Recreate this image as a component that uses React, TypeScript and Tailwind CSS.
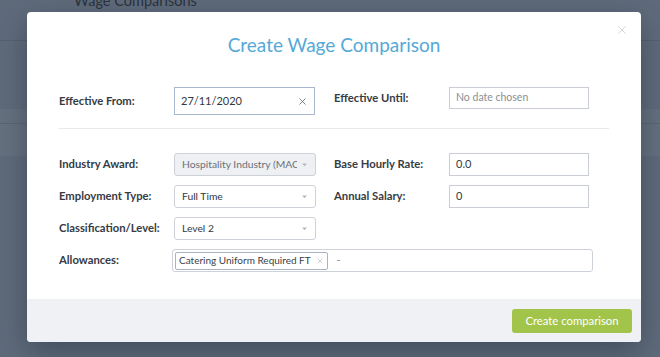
import { X } from "lucide-react";

function Caret() {
  return (
    <svg width="5" height="4" viewBox="0 0 5 4" className="shrink-0">
      <path d="M0 0.5 L5 0.5 L2.5 3.2 Z" fill="#b5b9c0" />
    </svg>
  );
}

function Label({ children }: { children: React.ReactNode }) {
  return <div className="w-[115px] shrink-0 text-[11.25px] font-bold text-[#363b44]">{children}</div>;
}

function Select({ value, disabled }: { value: string; disabled?: boolean }) {
  return (
    <div
      className={`flex h-[23px] w-[142px] items-center gap-[5px] rounded-[3px] border border-[#cdd1d8] pl-[7px] pr-[8px] text-[10.3px] ${
        disabled ? "bg-[#eef0f3] text-[#6b7079]" : "bg-white text-[#333840]"
      }`}
    >
      <span className="flex-1 overflow-hidden whitespace-nowrap">{value}</span>
      <Caret />
    </div>
  );
}

function TextInput({ value }: { value: string }) {
  return (
    <div className="flex h-[23px] w-[140px] items-center border border-[#c9cdd4] px-[6px] text-[11px] text-[#333840]">
      {value}
    </div>
  );
}

export default function App() {
  return (
    <div className="relative h-[357px] w-[660px] overflow-hidden bg-[#5f6b7b] font-['Lato',sans-serif]">
      {/* page behind the overlay */}
      <div className="flex flex-col">
        <div className="h-[41px] border-b border-[#566170] pl-[74px] text-[14.5px] leading-[12px] text-[#2a323d]">
          <span className="relative top-[-5px]">Wage Comparisons</span>
        </div>
        <div className="mt-[68px] h-[47px] bg-[#65717f]">
          <div className="h-[15px] border-b border-[#5a6572]" />
        </div>
      </div>

      {/* modal */}
      <div className="absolute left-[27px] top-[12px] w-[614px] overflow-hidden rounded-[4px] bg-white shadow-[0_10px_30px_rgba(30,40,55,0.45)]">
        <div className="absolute right-[12px] top-[11px] text-[#c3c7cd]">
          <X size={14} strokeWidth={1.2} />
        </div>
        <div className="pt-[21px] text-center text-[19px] leading-[24px] text-[#55a9d6]">Create Wage Comparison</div>

        <div className="px-[32px] pt-[30px]">
          <div className="flex items-start">
            <div className="flex w-[275px] items-center">
              <Label>Effective From:</Label>
              <div className="flex h-[28px] w-[141px] items-center justify-between border border-[#a7b7cf] pl-[6px] pr-[6px] text-[11px] text-[#333840]">
                <span>27/11/2020</span>
                <X size={11} strokeWidth={1.6} className="text-[#555a62]" />
              </div>
            </div>
            <div className="flex items-center">
              <Label>Effective Until:</Label>
              <div className="flex h-[22px] w-[140px] items-center border border-[#c9cdd4] px-[6px] text-[10.5px] text-[#8a8f96]">
                No date chosen
              </div>
            </div>
          </div>

          <div className="mt-[13px] h-px bg-[#e8eaee]" />

          <div className="mt-[24px] flex flex-col gap-[9px]">
            <div className="flex items-center">
              <div className="flex w-[275px] items-center">
                <Label>Industry Award:</Label>
                <Select value="Hospitality Industry (MAC" disabled />
              </div>
              <Label>Base Hourly Rate:</Label>
              <TextInput value="0.0" />
            </div>
            <div className="flex items-center">
              <div className="flex w-[275px] items-center">
                <Label>Employment Type:</Label>
                <Select value="Full Time" />
              </div>
              <Label>Annual Salary:</Label>
              <TextInput value="0" />
            </div>
            <div className="flex items-center">
              <div className="flex w-[275px] items-center">
                <Label>Classification/Level:</Label>
                <Select value="Level 2" />
              </div>
            </div>
            <div className="flex items-center">
              <div className="w-[113px] shrink-0 text-[11.25px] font-bold text-[#363b44]">Allowances:</div>
              <div className="flex h-[23px] w-[421px] items-center rounded-[3px] border border-[#cdd1d8] pl-[2px]">
                <div className="flex h-[18px] items-center gap-[5px] rounded-[2px] border border-[#a9b3c4] px-[3px] text-[10px] text-[#3a3f47]">
                  <span>Catering Uniform Required FT</span>
                  <X size={8} strokeWidth={1.5} className="text-[#9aa0a8]" />
                </div>
                <span className="ml-[9px] h-px w-[3px] bg-[#9aa0a8]" />
              </div>
            </div>
          </div>
        </div>

        <div className="mt-[27px] flex h-[43px] items-start justify-end bg-[#f0f1f5] pr-[9px] pt-[10px]">
          <button className="h-[24px] w-[120px] rounded-[3px] bg-[#a2c44b] text-[11.3px] text-white">Create comparison</button>
        </div>
      </div>
    </div>
  );
}
